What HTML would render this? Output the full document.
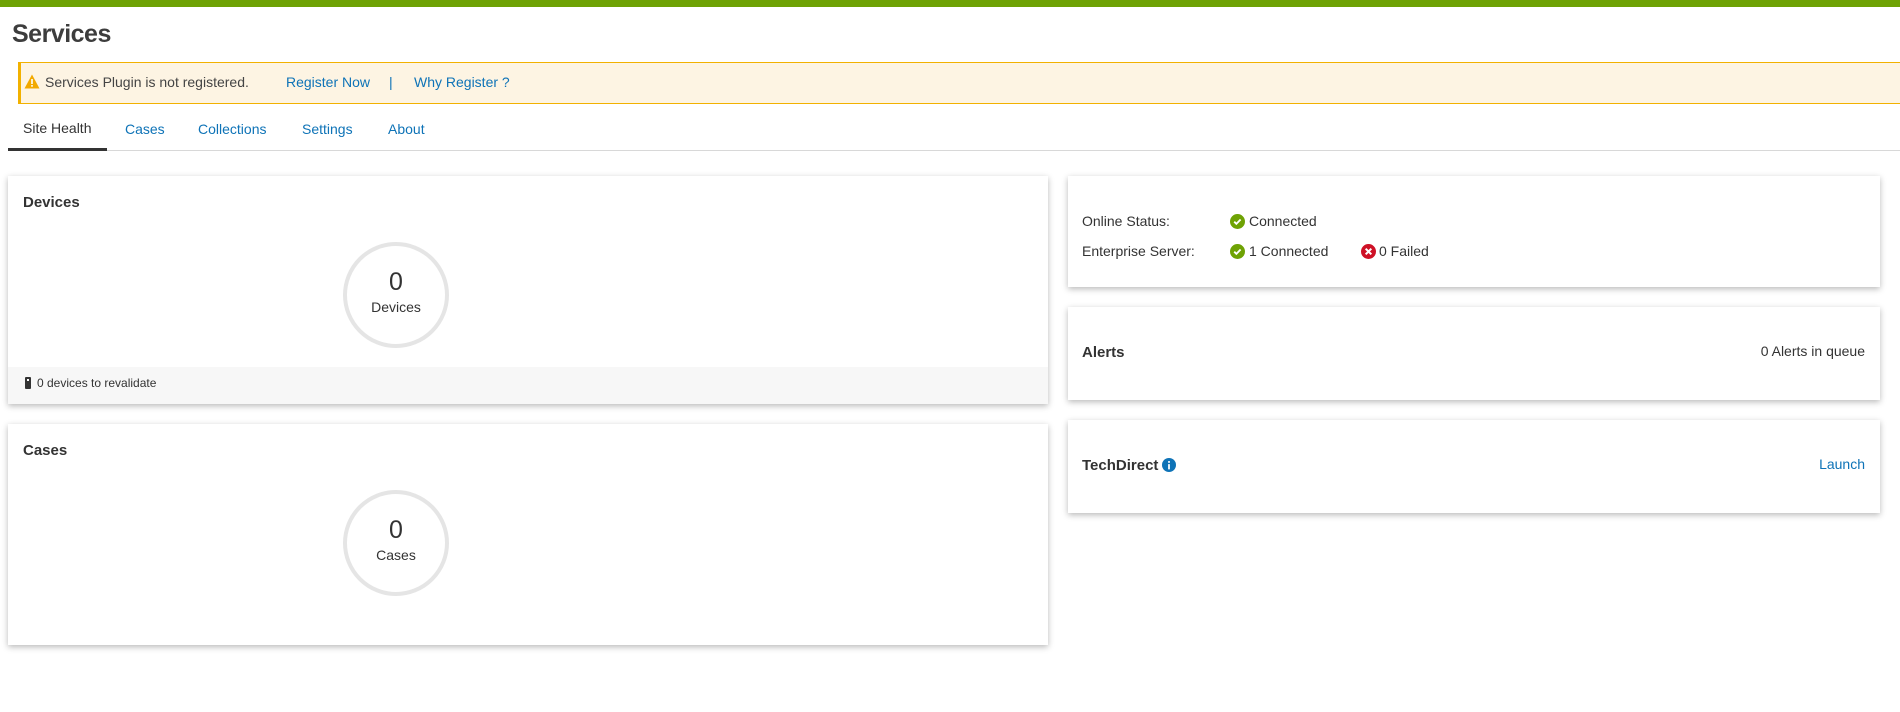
<!DOCTYPE html>
<html><head><meta charset="utf-8"><style>
*{box-sizing:border-box;margin:0;padding:0}
body{width:1900px;height:712px;background:#fff;font-family:"Liberation Sans",sans-serif;color:#333;position:relative;overflow:hidden}
.a{position:absolute}
.bar{left:0;top:0;width:1900px;height:7px;background:#6ea204}
h1{position:absolute;left:12px;top:20px;font-size:25px;font-weight:bold;color:#3d3d3d;letter-spacing:-0.5px}
.ban{left:18px;top:62px;width:1882px;height:42px;background:#fdf4e3;border:1px solid #f2b100;border-left:3px solid #f2b100;border-right:none}
.t{font-size:14px;white-space:nowrap}
.blue{color:#0e73b7}
.card{position:absolute;background:#fff;box-shadow:0 2px 6px rgba(0,0,0,.28)}
.ttl{font-size:15px;font-weight:bold;color:#333}
.circ{position:absolute;width:106px;height:106px;border:4px solid #e5e5e5;border-radius:50%;text-align:center}
.circ .n{font-size:25px;margin-top:22px;color:#333}
.circ .l{font-size:14px;margin-top:2px}
.tabline{left:8px;top:150px;width:1892px;height:1px;background:#d8d8d8}
</style></head><body>
<div class="a bar"></div>
<h1>Services</h1>
<div class="a ban"></div>
<svg class="a" style="left:24px;top:74px" width="16" height="15" viewBox="0 0 16 15"><path d="M8 0.5L15.5 14.5H0.5Z" fill="#f2a900"/><rect x="7.2" y="5" width="1.6" height="5" fill="#fff"/><rect x="7.2" y="11" width="1.6" height="1.7" fill="#fff"/></svg>
<div class="a t" style="left:45px;top:74px;color:#444">Services Plugin is not registered.</div>
<div class="a t blue" style="left:286px;top:74px">Register Now</div>
<div class="a t blue" style="left:389px;top:74px">|</div>
<div class="a t blue" style="left:414px;top:74px">Why Register ?</div>

<div class="a t" style="left:23px;top:120px;color:#333">Site Health</div>
<div class="a t blue" style="left:125px;top:121px">Cases</div>
<div class="a t blue" style="left:198px;top:121px">Collections</div>
<div class="a t blue" style="left:302px;top:121px">Settings</div>
<div class="a t blue" style="left:388px;top:121px">About</div>
<div class="a tabline"></div>
<div class="a" style="left:8px;top:148px;width:99px;height:3px;background:#333"></div>

<div class="card" style="left:8px;top:176px;width:1040px;height:228px">
<div class="a ttl" style="left:15px;top:18px">Devices</div>
<div class="circ" style="left:335px;top:66px"><div class="n">0</div><div class="l">Devices</div></div>
<div class="a" style="left:0;top:191px;width:1040px;height:37px;background:#f7f7f7"></div>
<div class="a" style="left:17px;top:201px;width:6px;height:12px;background:#333;border-radius:1px"></div>
<div class="a" style="left:19px;top:203px;width:2px;height:2px;background:#fff"></div>
<div class="a" style="left:29px;top:200px;font-size:12px">0 devices to revalidate</div>
</div>

<div class="card" style="left:8px;top:424px;width:1040px;height:221px">
<div class="a ttl" style="left:15px;top:18px">Cases</div>
<div class="circ" style="left:335px;top:66px"><div class="n">0</div><div class="l">Cases</div></div>
</div>

<div class="card" style="left:1068px;top:176px;width:812px;height:111px">
<div class="a t" style="left:14px;top:37px">Online Status:</div>
<div class="a t" style="left:14px;top:67px">Enterprise Server:</div>
<svg class="a" style="left:162px;top:38px" width="15" height="15" viewBox="0 0 16 16"><circle cx="8" cy="8" r="8" fill="#6ea204"/><path d="M4.5 8.2l2.3 2.3 4.5-4.6" stroke="#fff" stroke-width="2" fill="none"/></svg>
<div class="a t" style="left:181px;top:37px">Connected</div>
<svg class="a" style="left:162px;top:68px" width="15" height="15" viewBox="0 0 16 16"><circle cx="8" cy="8" r="8" fill="#6ea204"/><path d="M4.5 8.2l2.3 2.3 4.5-4.6" stroke="#fff" stroke-width="2" fill="none"/></svg>
<div class="a t" style="left:181px;top:67px">1 Connected</div>
<svg class="a" style="left:293px;top:68px" width="15" height="15" viewBox="0 0 16 16"><circle cx="8" cy="8" r="8" fill="#ce1126"/><path d="M5 5l6 6M11 5l-6 6" stroke="#fff" stroke-width="2.2"/></svg>
<div class="a t" style="left:311px;top:67px">0 Failed</div>
</div>

<div class="card" style="left:1068px;top:307px;width:812px;height:93px">
<div class="a ttl" style="left:14px;top:37px">Alerts</div>
<div class="a t" style="right:15px;top:36px">0 Alerts in queue</div>
</div>

<div class="card" style="left:1068px;top:420px;width:812px;height:93px">
<div class="a ttl" style="left:14px;top:37px">TechDirect</div>
<svg class="a" style="left:94px;top:38px" width="14" height="14" viewBox="0 0 16 16"><circle cx="8" cy="8" r="8" fill="#0e73b7"/><rect x="7" y="7" width="2" height="6" fill="#fff"/><rect x="7" y="3.5" width="2" height="2" fill="#fff"/></svg>
<div class="a t blue" style="right:15px;top:36px">Launch</div>
</div>
</body></html>
